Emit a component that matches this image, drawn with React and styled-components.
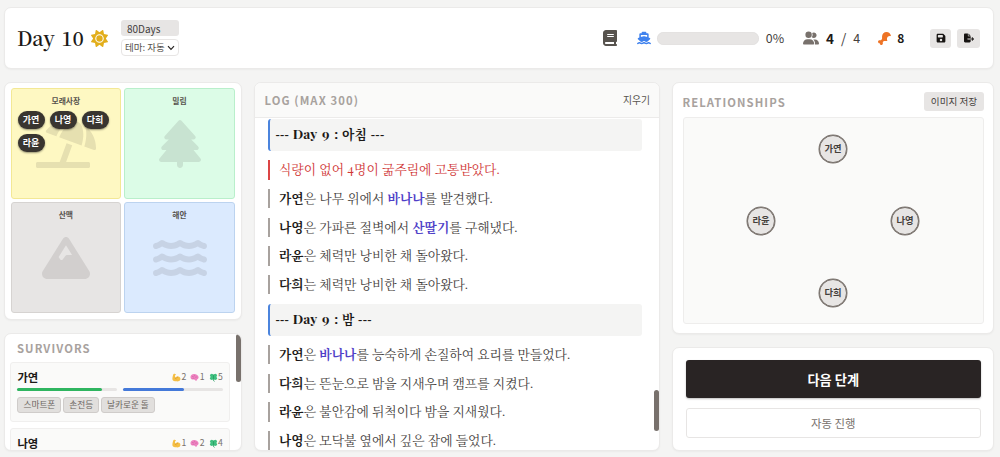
import React from "react";
import styled, { createGlobalStyle } from "styled-components";
import { FaUmbrellaBeach } from "react-icons/fa";
import {
  FaSun,
  FaBook,
  FaShip,
  FaUserGroup,
  FaDrumstickBite,
  FaFloppyDisk,
  FaFileExport,
  FaTree,
  FaMountain,
  FaWater,
} from "react-icons/fa6";

const sans = `"Noto Sans CJK KR", sans-serif`;
const serif = `"Liberation Serif", "Noto Serif CJK KR", "Noto Sans CJK KR", serif`;

const GlobalStyle = createGlobalStyle`
  * { box-sizing: border-box; }
  body { margin: 0; background: #f4f4f3; overflow: hidden; }
  button { margin: 0; padding: 0; font-family: inherit; }
`;

const Page = styled.div`
  width: 1000px;
  height: 457px;
  padding: 7px 6px 6px 4px;
  display: flex;
  flex-direction: column;
  gap: 13px;
  font-family: ${sans};
  color: #1c1917;
`;

const Card = styled.section`
  position: relative;
  background: #fff;
  border: 1px solid #ebeae9;
  border-radius: 7px;
  box-shadow: 0 1px 2px rgba(0, 0, 0, 0.04);
  overflow: hidden;
`;

const TopBar = styled(Card)`
  height: 62px;
  flex: none;
  display: flex;
  align-items: center;
  justify-content: space-between;
  padding: 0 12.6px 0 12px;
`;

const Group = styled.div`
  display: flex;
  align-items: center;
`;

const DayTitle = styled.h1`
  margin: 0;
  width: 67px;
  font: 600 19.8px/30px "Noto Serif CJK KR", serif;
  word-spacing: 1.5px;
  white-space: nowrap;
`;

const SunIcon = styled(FaSun)`
  margin-left: 7px;
  font-size: 17px;
  color: #e2ae1c;
`;

const Settings = styled.div`
  width: 58px;
  margin-left: 13px;
  display: flex;
  flex-direction: column;
  gap: 3px;
  font-size: 10px;
  white-space: nowrap;
`;

const ModeTag = styled.div`
  height: 16px;
  padding-left: 6px;
  line-height: 17px;
  border-radius: 3px;
  background: #e7e5e4;
  color: #44403c;
`;

const ThemeSelect = styled.div`
  height: 17px;
  padding: 0 3px;
  display: flex;
  align-items: center;
  justify-content: space-between;
  font-size: 9.5px;
  line-height: 15px;
  border: 1px solid #e7e5e4;
  border-radius: 4px;
  color: #57534e;
`;

const StatText = styled.span`
  font-size: ${(p) => p.$size || 13.5}px;
  font-weight: ${(p) => (p.$bold ? 700 : 400)};
  line-height: 20px;
  color: ${(p) => (p.$bold ? "#1c1917" : "#44403c")};
  margin-left: ${(p) => p.$gap || 0}px;
  white-space: pre;
`;

const StatIcon = styled.span`
  display: flex;
  color: ${(p) => p.$color};
  font-size: ${(p) => p.$size}px;
  margin-left: ${(p) => p.$gap || 0}px;
`;

const ShipProgress = styled.div`
  width: 102px;
  height: 13px;
  margin-left: 6px;
  border-radius: 7px;
  background: #e7e5e4;
  box-shadow: inset 0 0 1px rgba(0, 0, 0, 0.12);
`;

const IconButton = styled.button`
  width: ${(p) => p.$width}px;
  height: 19px;
  margin-left: ${(p) => p.$gap}px;
  display: flex;
  align-items: center;
  justify-content: center;
  border: 0;
  border-radius: 3px;
  background: #e7e5e4;
  color: #171412;
  font-size: 10px;
`;

const Columns = styled.main`
  flex: 1;
  min-height: 0;
  display: grid;
  grid-template-columns: 238px 406px 322px;
  column-gap: 12px;
`;

const Column = styled.div`
  min-height: 0;
  display: flex;
  flex-direction: column;
  gap: 13px;
`;

const MapCard = styled(Card)`
  height: 238px;
  flex: none;
  padding: 5px 5px 5px 5.5px;
  display: grid;
  grid-template-columns: 110.7px 110.7px;
  grid-template-rows: 111px 111px;
  gap: 3px;
`;

const Region = styled.div`
  position: relative;
  padding: 7px 6px;
  background: ${(p) => p.$bg};
  border: 1px solid ${(p) => p.$line};
  border-radius: 3px;
  text-align: center;
`;

const RegionName = styled.div`
  font-size: 7.8px;
  line-height: 10px;
  font-weight: 700;
  color: #57534e;
`;

const RegionArt = styled.div`
  position: absolute;
  inset: 0;
  display: flex;
  align-items: center;
  justify-content: center;
  font-size: ${(p) => p.$size || 48}px;
  color: rgba(68, 64, 60, 0.13);
`;

const Pins = styled.div`
  position: relative;
  margin-top: 5px;
  display: flex;
  flex-wrap: wrap;
  gap: 5px;
`;

const Pin = styled.span`
  width: 27px;
  height: 18px;
  line-height: 17px;
  border-radius: 9px;
  background: #393530;
  color: #fff;
  font-size: 9px;
  font-weight: 700;
  box-shadow: 0 1px 2px rgba(0, 0, 0, 0.4);
`;

const SurvivorCard = styled(Card)`
  flex: 1;
  min-height: 0;
  padding: 5px 11px 0 5.4px;
`;

const Heading = styled.h2`
  margin: 0;
  font-size: 11.3px;
  line-height: 18px;
  font-weight: 700;
  letter-spacing: 1.08px;
  color: #a8a29e;
  white-space: nowrap;
`;

const SurvivorHead = styled.div`
  padding-left: 6.6px;
  height: 23px;
`;

const Survivor = styled.article`
  width: 219.5px;
  height: 60px;
  margin-bottom: 6px;
  padding: 5px 6px;
  background: #fafaf9;
  border: 1px solid #f0efee;
  border-radius: 3px;
`;

const SurvivorTop = styled.div`
  height: 20px;
  display: flex;
  align-items: center;
  justify-content: space-between;
`;

const SurvivorName = styled.span`
  font-size: 11.3px;
  line-height: 18px;
  font-weight: 700;
  transform: translateY(-1px);
`;

const Abilities = styled.div`
  display: flex;
  align-items: center;
  gap: 4px;
  font-size: 8.7px;
  line-height: 14px;
  color: #78716c;
  transform: translateY(-1px);
`;

const Ability = styled.span`
  display: flex;
  align-items: center;
  gap: 0.5px;
`;

const Gauges = styled.div`
  display: grid;
  grid-template-columns: 1fr 1fr;
  gap: 6px;
`;

const Gauge = styled.div`
  height: 3px;
  border-radius: 2px;
  background: #e7e5e4;
`;

const GaugeFill = styled.div`
  height: 3px;
  border-radius: 2px;
  background: ${(p) => p.$color};
`;

const Items = styled.div`
  margin-top: 6px;
  display: flex;
  gap: 1.8px;
`;

const Item = styled.span`
  height: 16px;
  padding: 0 5px;
  border: 1px solid #cfccca;
  border-radius: 3px;
  background: #e1dfdd;
  color: #6b6560;
  font-size: 8.7px;
  line-height: 14px;
  white-space: nowrap;
`;

const ScrollThumb = styled.div`
  position: absolute;
  right: 0;
  top: ${(p) => p.$top}px;
  width: 5px;
  height: ${(p) => p.$height}px;
  border-radius: 3px;
  background: #78716c;
`;

const LogHead = styled.header`
  height: 35px;
  padding: 0 9px 0 9.5px;
  display: flex;
  align-items: center;
  justify-content: space-between;
  background: #fafaf9;
  border-bottom: 1px solid #ecebea;
`;

const ClearButton = styled.button`
  border: 0;
  background: none;
  font-size: 9.8px;
  line-height: 16px;
  color: #57534e;
`;

const LogBody = styled.div`
  padding: 1px 17px 0 12.5px;
  font-family: ${serif};
  font-size: 12.8px;
`;

const PhaseLine = styled.div`
  height: 32px;
  margin-bottom: 9.2px;
  padding-left: 6px;
  border-left: 2px solid #4b84dd;
  border-radius: 3px;
  background: #f4f4f3;
  line-height: 32px;
  font-weight: 700;
  letter-spacing: 0.3px;
  white-space: nowrap;
`;

const Latin = styled.span`
  font-family: "Playfair Display", serif;
  font-size: 13.5px;
  line-height: 0;
  letter-spacing: 0.2px;
  word-spacing: 1.4px;
`;

const LogLine = styled.div`
  height: 19.4px;
  margin-bottom: 9.3px;
  padding-left: 9.5px;
  border-left: 2px solid ${(p) => (p.$danger ? "#dc4545" : "#a8a29e")};
  line-height: 20px;
  color: ${(p) => (p.$danger ? "#d03636" : "#44403c")};
  white-space: nowrap;

  b { color: #1c1917; }
  em { font-style: normal; font-weight: 700; color: #4f3fc8; }
`;

const RelationCard = styled(Card)`
  height: 252px;
  flex: none;
  padding: 9px 9px 9px 9.5px;
`;

const RelationHead = styled.div`
  height: 19px;
  margin-bottom: 6px;
  display: flex;
  align-items: center;
  justify-content: space-between;
`;

const SaveImage = styled.button`
  width: 60px;
  height: 19px;
  border: 0;
  border-radius: 3px;
  background: #e7e5e4;
  color: #44403c;
  font-size: 9.6px;
  line-height: 19px;
  white-space: nowrap;
`;

const Graph = styled.div`
  position: relative;
  height: 207px;
  background: #fafaf9;
  border: 1px solid #eeedec;
  border-radius: 3px;
`;

const Node = styled.div`
  position: absolute;
  left: ${(p) => p.$x}px;
  top: ${(p) => p.$y}px;
  width: 28px;
  height: 28px;
  transform: translate(-50%, -50%);
  border: 1.5px solid #78716c;
  border-radius: 50%;
  background: #e7e5e4;
  box-shadow: 0 0 0 0.5px #78716c;
  color: #44403c;
  text-align: center;
  font-size: 9.3px;
  line-height: 25px;
  font-weight: 700;
`;

const ActionCard = styled(Card)`
  flex: 1;
  padding: 12px 12px 12px 12.5px;
  display: flex;
  flex-direction: column;
  gap: 10px;
`;

const NextButton = styled.button`
  height: 38px;
  border: 0;
  border-radius: 3px;
  background: #292424;
  color: #fff;
  font-size: 13.2px;
  font-weight: 700;
  box-shadow: 0 1px 2px rgba(0, 0, 0, 0.25);
`;

const AutoButton = styled.button`
  height: 30px;
  border: 1px solid #e7e5e4;
  border-radius: 3px;
  background: #fff;
  color: #78716c;
  font-size: 11.4px;
  line-height: 26px;
`;

const Chevron = () => (
  <svg width="8" height="6" viewBox="0 0 8 6" fill="none" stroke="#292524" strokeWidth="1.2">
    <path d="M1 1.2 4 4.3 7 1.2" />
  </svg>
);

const Muscle = () => (
  <svg width="9" height="9" viewBox="0 0 18 18">
    <path
      d="M3 2.200C4.600 .8 7 1 7.600 2.600c.4 1.300-.6 2.100-1.800 2.200L6.500 9c1.500-1.700 4-2.600 6.500-1.800 3.200 1 4.600 4 3.600 6.500-1 2.300-4 3.300-7.600 3-4-.2-7-1.200-8-3.200C.2 11 1.600 5 3 2.200Z"
      fill="#f5bf45"
    />
    <path d="M6 9.500c.2 1.600 1.400 2.600 3 2.500M12 7.500c-1.600.5-2.500 1.500-2.600 2.800" stroke="#cf8d25" strokeWidth="1.200" fill="none" />
  </svg>
);

const Brain = () => (
  <svg width="9" height="9" viewBox="0 0 18 18">
    <path
      d="M1 9C.5 5 4 2 8 2c5 0 9 2.500 9.200 6.500.1 2.300-1.200 3.500-2.700 3.700.3 2-1 3.500-2.700 3.300-1.400-.1-2-1.500-3.100-2.400C5.500 13.500 1.400 13 1 9Z"
      fill="#ed84c1"
    />
    <path d="M4 8c1.500-2 3-1 3.500.3M8 4.500c1.500 0 2.500 1 2 2.500M11 9.500c.5-1.500 2-2 3.500-1.200M5 11c1.500-.8 3-.5 4 .5" stroke="#cf569c" strokeWidth="1.100" fill="none" />
  </svg>
);

const Clover = () => (
  <svg width="9" height="9" viewBox="0 0 18 18">
    <g fill="#3fbf7f">
      <circle cx="5.500" cy="4.800" r="3.500" />
      <circle cx="12.500" cy="4.800" r="3.500" />
      <circle cx="5.500" cy="10.500" r="3.500" />
      <circle cx="12.500" cy="10.500" r="3.500" />
      <rect x="6" y="5" width="6" height="6" />
    </g>
    <path d="M9 3v11c0 1.500.8 2.500 2 3" stroke="#249a5d" strokeWidth="1.500" fill="none" />
  </svg>
);

const regions = [
  { name: "모래사장", bg: "#fef8c2", line: "#f3e895", Icon: FaUmbrellaBeach, size: 60, pins: ["가연", "나영", "다희", "라윤"] },
  { name: "밀림", bg: "#dcfce7", line: "#b9efcb", Icon: FaTree, size: 48 },
  { name: "산맥", bg: "#e7e5e4", line: "#d6d3d1", Icon: FaMountain, size: 48 },
  { name: "해안", bg: "#dbeafe", line: "#bcd3ef", Icon: FaWater, size: 54 },
];

const survivors = [
  { name: "가연", str: 2, int: 1, luck: 5, health: 85, mind: 61, items: ["스마트폰", "손전등", "날카로운 돌"] },
  { name: "나영", str: 1, int: 2, luck: 4, health: 85, mind: 61, items: [] },
];

const nodes = [
  { name: "가연", x: 149.5, y: 30.5 },
  { name: "라윤", x: 77.5, y: 102.5 },
  { name: "나영", x: 221.5, y: 102.5 },
  { name: "다희", x: 149.5, y: 174.5 },
];

export default function App() {
  return (
    <Page>
      <GlobalStyle />
      <TopBar as="header">
        <Group>
          <DayTitle>Day 10</DayTitle>
          <SunIcon />
          <Settings>
            <ModeTag>80Days</ModeTag>
            <ThemeSelect>
              테마: 자동
              <Chevron />
            </ThemeSelect>
          </Settings>
        </Group>
        <Group>
          <StatIcon $color="#57534e" $size={16}><FaBook /></StatIcon>
          <StatIcon $color="#3f82ee" $size={14} $gap={19}><FaShip /></StatIcon>
          <ShipProgress />
          <StatText $size={12.4} $gap={7}>0%</StatText>
          <StatIcon $color="#78716c" $size={16} $gap={19}><FaUserGroup /></StatIcon>
          <StatText $bold $gap={7}>4</StatText>
          <StatText $gap={7}>/</StatText>
          <StatText $gap={7} $size={12.5}>4</StatText>
          <StatIcon $color="#ee7426" $size={13} $gap={18}><FaDrumstickBite /></StatIcon>
          <StatText $bold $gap={6} $size={12}>8</StatText>
          <IconButton $width={21} $gap={26}><FaFloppyDisk /></IconButton>
          <IconButton $width={23} $gap={6}><FaFileExport /></IconButton>
        </Group>
      </TopBar>

      <Columns>
        <Column>
          <MapCard>
            {regions.map(({ name, bg, line, Icon, size, pins }) => (
              <Region key={name} $bg={bg} $line={line}>
                <RegionArt $size={size}><Icon /></RegionArt>
                <RegionName>{name}</RegionName>
                {pins && <Pins>{pins.map((p) => <Pin key={p}>{p}</Pin>)}</Pins>}
              </Region>
            ))}
          </MapCard>
          <SurvivorCard>
            <SurvivorHead><Heading>SURVIVORS</Heading></SurvivorHead>
            {survivors.map((s) => (
              <Survivor key={s.name}>
                <SurvivorTop>
                  <SurvivorName>{s.name}</SurvivorName>
                  <Abilities>
                    <Ability><Muscle />{s.str}</Ability>
                    <Ability><Brain />{s.int}</Ability>
                    <Ability><Clover />{s.luck}</Ability>
                  </Abilities>
                </SurvivorTop>
                <Gauges>
                  <Gauge><GaugeFill $color="#2fb560" style={{ width: `${s.health}%` }} /></Gauge>
                  <Gauge><GaugeFill $color="#4479d9" style={{ width: `${s.mind}%` }} /></Gauge>
                </Gauges>
                <Items>{s.items.map((i) => <Item key={i}>{i}</Item>)}</Items>
              </Survivor>
            ))}
            <ScrollThumb $top={0} $height={48} />
          </SurvivorCard>
        </Column>

        <Card>
          <LogHead>
            <Heading>LOG (MAX 300)</Heading>
            <ClearButton>지우기</ClearButton>
          </LogHead>
          <LogBody>
            <PhaseLine>--- <Latin>Day 9 :</Latin> 아침 ---</PhaseLine>
            <LogLine $danger>식량이 없어 <Latin>4</Latin>명이 굶주림에 고통받았다.</LogLine>
            <LogLine><b>가연</b>은 나무 위에서 <em>바나나</em>를 발견했다.</LogLine>
            <LogLine><b>나영</b>은 가파른 절벽에서 <em>산딸기</em>를 구해냈다.</LogLine>
            <LogLine><b>라윤</b>은 체력만 낭비한 채 돌아왔다.</LogLine>
            <LogLine><b>다희</b>는 체력만 낭비한 채 돌아왔다.</LogLine>
            <PhaseLine>--- <Latin>Day 9 :</Latin> 밤 ---</PhaseLine>
            <LogLine><b>가연</b>은 <em>바나나</em>를 능숙하게 손질하여 요리를 만들었다.</LogLine>
            <LogLine><b>다희</b>는 뜬눈으로 밤을 지새우며 캠프를 지켰다.</LogLine>
            <LogLine><b>라윤</b>은 불안감에 뒤척이다 밤을 지새웠다.</LogLine>
            <LogLine><b>나영</b>은 모닥불 옆에서 깊은 잠에 들었다.</LogLine>
          </LogBody>
          <ScrollThumb $top={307} $height={41} />
        </Card>

        <Column>
          <RelationCard>
            <RelationHead>
              <Heading>RELATIONSHIPS</Heading>
              <SaveImage>이미지 저장</SaveImage>
            </RelationHead>
            <Graph>
              {nodes.map((n) => <Node key={n.name} $x={n.x} $y={n.y}>{n.name}</Node>)}
            </Graph>
          </RelationCard>
          <ActionCard>
            <NextButton>다음 단계</NextButton>
            <AutoButton>자동 진행</AutoButton>
          </ActionCard>
        </Column>
      </Columns>
    </Page>
  );
}
